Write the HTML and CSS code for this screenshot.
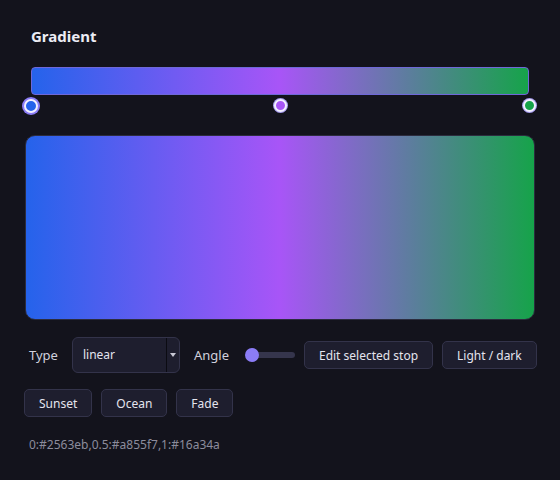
FILE: index.html
```html
<!DOCTYPE html>
<html lang="en">
<head>
    <meta charset="UTF-8">
    <title>Gradient</title>
    <link rel="stylesheet" href="styles.css">
</head>
<body>
    <div class="editor">
        <h1 class="title">Gradient</h1>

        <div class="strip">
            <div class="bar"></div>
            <div class="stops">
                <span class="stop selected" style="left: 0%; background: #2563eb;"></span>
                <span class="stop" style="left: 50%; background: #a855f7;"></span>
                <span class="stop" style="left: 100%; background: #16a34a;"></span>
            </div>
        </div>

        <div class="preview"></div>

        <div class="row controls">
            <span class="label type-label">Type</span>
            <div class="select">
                <span class="select-value">linear</span>
                <span class="select-arrow"></span>
            </div>
            <span class="label angle-label">Angle</span>
            <div class="slider">
                <span class="track"></span>
                <span class="thumb"></span>
            </div>
            <button class="btn">Edit selected stop</button>
            <button class="btn">Light / dark</button>
        </div>

        <div class="row presets">
            <button class="btn">Sunset</button>
            <button class="btn">Ocean</button>
            <button class="btn">Fade</button>
        </div>

        <div class="code">0:#2563eb,0.5:#a855f7,1:#16a34a</div>
    </div>
</body>
</html>
```

FILE: styles.css
```css
:root {
    --bg: #13131c;
    --panel: #1e1e2e;
    --line: #33334a;
    --text: #e4e4ee;
    --muted: #8c8c9c;
    --gradient: linear-gradient(to right, #2563eb 0%, #a855f7 50%, #16a34a 100%);
}

* {
    margin: 0;
    padding: 0;
    box-sizing: border-box;
}

body {
    font-family: 'Noto Sans', 'Open Sans', sans-serif;
    background-color: var(--bg);
    color: var(--text);
    width: 560px;
    height: 480px;
    overflow: hidden;
}

.editor {
    padding: 26px 25px 0 25px;
}

.title {
    font-size: 15px;
    font-weight: 700;
    line-height: 20px;
    padding-left: 6px;
    color: #ececf4;
}

.strip {
    margin: 21px 6px 0 6px;
}

.bar {
    height: 28px;
    border: 1px solid #6f68d8;
    border-radius: 4px;
    background: var(--gradient);
}

.stops {
    position: relative;
    height: 14px;
    margin-top: 4px;
}

.stop {
    position: absolute;
    top: 0;
    width: 13px;
    height: 13px;
    margin-left: -6.5px;
    border-radius: 50%;
    border: 2px solid #f2f0ff;
    box-shadow: 0 0 0 1px #a79cf0;
}

.stop.selected {
    width: 14px;
    height: 14px;
    margin-left: -7px;
    box-shadow: 0 0 0 2px #8b7cf6;
}

.preview {
    margin-top: 22px;
    height: 185px;
    border: 1px solid #2c2c3e;
    border-radius: 10px;
    background: var(--gradient);
}

.row {
    display: flex;
    align-items: center;
    gap: 9px;
}

.row > * {
    flex-shrink: 0;
}

.controls {
    margin-top: 17px;
    height: 36px;
}

.label {
    font-size: 13px;
    color: #d0d0dc;
}

.type-label {
    margin-left: 4px;
    margin-right: 5px;
}

.angle-label {
    margin-left: 5px;
    margin-right: 7px;
}

.select {
    display: flex;
    width: 108px;
    height: 36px;
    background: var(--panel);
    border: 1px solid var(--line);
    border-radius: 6px;
    overflow: hidden;
}

.select-value {
    flex: 1;
    font-size: 12px;
    line-height: 34px;
    padding-left: 10px;
    color: var(--text);
}

.select-arrow {
    width: 13px;
    border-left: 1px solid #0b0b12;
    position: relative;
}

.select-arrow::after {
    content: '';
    position: absolute;
    left: 3px;
    top: 15px;
    border-left: 3.5px solid transparent;
    border-right: 3.5px solid transparent;
    border-top: 4px solid #c8c8d4;
}

.slider {
    position: relative;
    width: 50px;
    height: 14px;
}

.track {
    position: absolute;
    left: 6px;
    right: 0;
    top: 4px;
    height: 6px;
    border-radius: 3px;
    background: #35354c;
}

.thumb {
    position: absolute;
    left: 0;
    top: 0;
    width: 14px;
    height: 14px;
    border-radius: 50%;
    background: #8b7cf6;
}

.btn {
    font-family: 'Noto Sans', 'Open Sans', sans-serif;
    font-size: 12px;
    color: var(--text);
    background: var(--panel);
    border: 1px solid var(--line);
    border-radius: 5px;
    height: 28px;
    padding: 0 14px;
    white-space: nowrap;
    cursor: pointer;
}

.presets {
    margin-top: 16px;
    margin-left: -1px;
}

.code {
    margin-top: 19px;
    padding-left: 4px;
    font-size: 12px;
    color: var(--muted);
}
```
